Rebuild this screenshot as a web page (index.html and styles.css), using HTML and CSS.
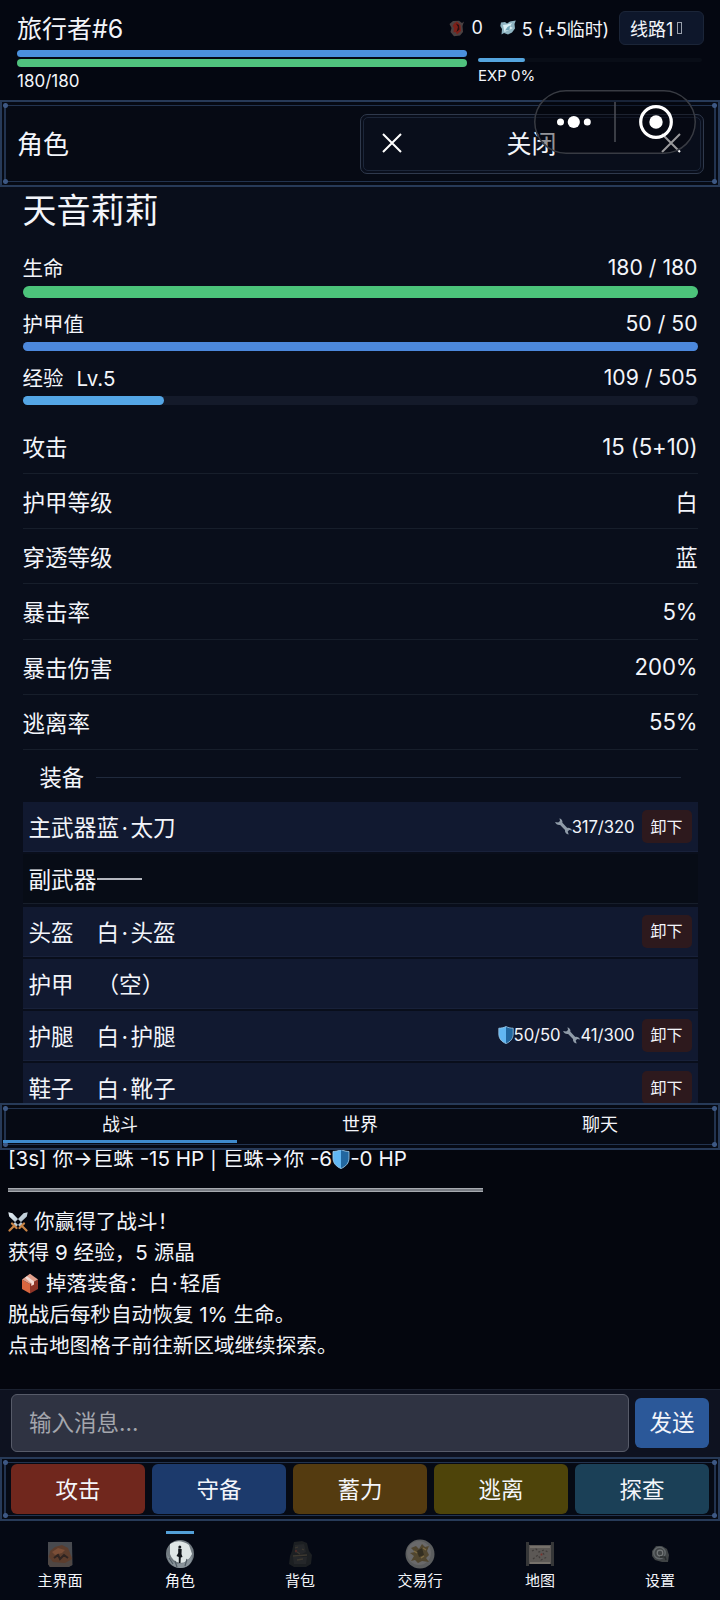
FILE: index.html
```html
<!DOCTYPE html>
<html lang="zh-CN">
<head>
<meta charset="utf-8">
<title>角色</title>
<link rel="stylesheet" href="styles.css">
</head>
<body>
<svg class="defs" width="0" height="0" aria-hidden="true">
  <defs>
    <linearGradient id="blade" x1="0" y1="0" x2="1" y2="1"><stop offset="0" stop-color="#e8f1f7"/><stop offset="1" stop-color="#9db0be"/></linearGradient>
    <symbol id="shield" viewBox="0 0 16 18">
      <path d="M8 .5C5.500 1.800 3 2.200 .8 2.200V8c0 4.800 3 7.800 7.200 9.600Z" fill="#62b7f2"/>
      <path d="M8 .5c2.500 1.300 5 1.700 7.200 1.700V8c0 4.800-3 7.800-7.200 9.600Z" fill="#22679f"/>
      <path d="M8 .5C5.500 1.800 3 2.200 .8 2.200V8c0 4.800 3 7.800 7.200 9.600 4.200-1.800 7.200-4.800 7.200-9.600V2.200C13 2.200 10.500 1.800 8 .5Z" fill="none" stroke="#9cc8e6" stroke-width=".8"/>
    </symbol>
    <symbol id="wrench" viewBox="0 0 17 17">
      <path d="M4.500 .2c2.200.6 3.300 2.500 2.900 4.500l4.900 5.200c2-.4 4.100.7 4.700 2.700l-2.800-.6-1.500 1.400 1 3.200c-2.500-.3-4.100-2.400-3.700-4.600L5.100 7C3 7.400 .8 6.200 .1 4l3.100.6 1.800-1.600Z" fill="#8f9ba8"/>
    </symbol>
    <symbol id="swords" viewBox="0 0 20 20">
      <path d="M.3.3 4.500 1.200 15 12.200 12.200 15 1.200 4.500ZM19.700.3 15.500 1.200 5 12.200 7.800 15 18.800 4.500Z" fill="url(#blade)"/>
      <path d="M11.500 16 16 11.500M14.500 14.500l4 4M8.500 16 4 11.500M5.500 14.500l-4 4" stroke="#c98445" stroke-width="2.200" stroke-linecap="round"/>
    </symbol>
    <symbol id="package" viewBox="0 0 18 21">
      <path d="M1 6.500 9 11V20.500L1 16Z" fill="#d9663f"/>
      <path d="M9 11l8-4.500V16l-8 4.500Z" fill="#8d3427"/>
      <path d="M1 6.500 9 .8l8 5.700L9 11Z" fill="#e3a08c"/>
      <path d="M6 3.200 13 8.600v3L10.300 13V10.200L4 4.800Z" fill="#f3dcd5"/>
    </symbol>
  </defs>
</svg>
<div class="app">
  <header class="status">
    <div class="status-top">
      <div class="player">旅行者#6</div>
      <div class="coin"><svg width="16" height="17" viewBox="0 0 16 17"><path d="M4 1 10 .8 13 3 15 1.500 13.500 6 14 12 11 15.500 5 16.300 1.500 12 2.500 8 .5 4Z" fill="#4b4142"/><path d="M5 3.500 8 1.500 11.500 5l.5 6L8 14.500 6.500 12 4.500 12.500 5 8 3.500 6Z" fill="#7d2019"/><path d="M7 3.500 9 7 7.500 12 10.500 9.500 10 5Z" fill="#251012"/></svg><span>0</span></div>
      <div class="crystal"><svg width="16" height="16" viewBox="0 0 16 16"><path d="M1 2.500 5 2 7 3.500 10 1.500 15.800.5 14.500 4 15 8.500 12 12.500 8 14.500 4 13 1.500 14.500 2 9 .3 6Z" fill="#8fb4c2"/><path d="M3 5 7 4.500 12 3 10 6.500 13 8 8 10.500 4.500 12Z" fill="#d8eef4"/><path d="M7.500 7 10 5.500 9.500 10 5 10.500Z" fill="#6fa3b6"/></svg><span>5 (+5临时)</span></div>
      <div class="line-chip"><span>线路1</span><i class="caret"></i></div>
    </div>
    <div class="status-bars">
      <div class="vitals">
        <div class="bar shield-bar"></div>
        <div class="bar health-bar"></div>
        <div class="vital-text">180/180</div>
      </div>
      <div class="exp">
        <div class="exp-track"><div class="exp-fill" style="width:21%"></div></div>
        <div class="exp-text">EXP 0%</div>
      </div>
    </div>
  </header>

  <section class="frame title-panel">
    <h1>角色</h1>
    <button class="close">
      <svg width="20" height="20" viewBox="0 0 20 20"><path d="M1 1 19 19M19 1 1 19" stroke="#fff" stroke-width="2"/></svg>
      <span>关闭</span>
      <svg width="20" height="20" viewBox="0 0 20 20"><path d="M1 1 19 19M19 1 1 19" stroke="#fff" stroke-width="2"/></svg>
    </button>
  </section>
  <div class="capsule">
    <svg width="162" height="64" viewBox="0 0 162 64"><g fill="#fff"><circle cx="26.500" cy="32" r="3.500"/><circle cx="39.800" cy="32" r="6.100"/><circle cx="53.300" cy="32" r="3.500"/><circle cx="122" cy="32" r="6.700"/></g><circle cx="122" cy="32" r="15.300" fill="none" stroke="#fff" stroke-width="3.200"/><path d="M81 12V52" stroke="#4c4f57" stroke-width="1.500"/></svg>
  </div>

  <main class="sheet">
    <h2>天音莉莉</h2>
    <div class="gauge life"><div class="gauge-head"><span>生命</span><b>180 / 180</b></div><div class="track"><div class="fill green" style="width:100%"></div></div></div>
    <div class="gauge"><div class="gauge-head"><span>护甲值</span><b>50 / 50</b></div><div class="track"><div class="fill blue" style="width:100%"></div></div></div>
    <div class="gauge"><div class="gauge-head"><span>经验<em>Lv.5</em></span><b>109 / 505</b></div><div class="track"><div class="fill sky" style="width:20.95%"></div></div></div>
    <dl class="stats">
      <div><dt>攻击</dt><dd>15 (5+10)</dd></div>
      <div><dt>护甲等级</dt><dd>白</dd></div>
      <div><dt>穿透等级</dt><dd>蓝</dd></div>
      <div><dt>暴击率</dt><dd>5%</dd></div>
      <div><dt>暴击伤害</dt><dd>200%</dd></div>
      <div><dt>逃离率</dt><dd>55%</dd></div>
    </dl>
    <h3>装备</h3>
    <ul class="gear">
      <li><span class="slot">主武器</span><span class="item">蓝<i class="dot">·</i>太刀</span><span class="wear"><svg width="17" height="17"><use href="#wrench"/></svg>317/320</span><button>卸下</button></li>
      <li class="none"><span class="slot">副武器</span><span class="item"><i class="dash"></i></span></li>
      <li><span class="slot">头盔</span><span class="item">白<i class="dot">·</i>头盔</span><button>卸下</button></li>
      <li><span class="slot">护甲</span><span class="item">（空）</span></li>
      <li><span class="slot">护腿</span><span class="item">白<i class="dot">·</i>护腿</span><span class="wear"><svg width="16" height="18"><use href="#shield"/></svg>50/50<svg class="gap" width="17" height="17"><use href="#wrench"/></svg>41/300</span><button>卸下</button></li>
      <li><span class="slot">鞋子</span><span class="item">白<i class="dot">·</i>靴子</span><button>卸下</button></li>
    </ul>
  </main>

  <nav class="frame tabs"><a class="on">战斗</a><a>世界</a><a>聊天</a></nav>

  <section class="log">
    <p>[3s] 你→巨蛛 -15 HP | 巨蛛→你 -6<svg width="18" height="20"><use href="#shield"/></svg>-0 HP</p>
    <hr>
    <p><svg class="swords" width="20" height="20"><use href="#swords"/></svg>你赢得了战斗！</p>
    <p>获得 9 经验，5 源晶</p>
    <p class="loot"><svg width="18" height="21"><use href="#package"/></svg>掉落装备：白<i class="dot">·</i>轻盾</p>
    <p>脱战后每秒自动恢复 1% 生命。</p>
    <p>点击地图格子前往新区域继续探索。</p>
  </section>

  <form class="composer">
    <div class="input">输入消息...</div>
    <button type="button">发送</button>
  </form>

  <section class="frame actions">
    <button class="attack">攻击</button>
    <button class="guard">守备</button>
    <button class="charge">蓄力</button>
    <button class="flee">逃离</button>
    <button class="scout">探查</button>
  </section>

  <nav class="dock">
    <a><svg width="30" height="30" viewBox="0 0 30 30"><path d="M3 3 27 3 27.500 26 24 28 5 28 3 25Z" fill="#484a4f"/><path d="M3 16 12 15 27 17V26L23 28 5 28 3 25Z" fill="#4f4744"/><path d="M5 12 10 8 17 6 23 9 25 14 27 20 20 24 8 23 4 18Z" fill="#5c3d2d"/><path d="M7 13 13 9 20 11 17 14 10 16Z" fill="#7b4e37"/><path d="M9 19 13 16 15 20 19 16 23 19" stroke="#2f2421" stroke-width="2" fill="none"/></svg><span>主界面</span></a>
    <a class="on"><svg width="30" height="30" viewBox="0 0 30 30"><circle cx="15" cy="15" r="14" fill="#717a80"/><path d="M5 5Q14 -1 24 6L27 15Q23 24 15 24 7 22 5 15Z" fill="#dfe6e6"/><path d="M2 16 7 22 12 25 19 24 27 17Q27 29 15 29 4 28 2 16Z" fill="#89939a"/><path d="M4 19 8 25M10 22 12 28M22 20 20 27" stroke="#4f5a62" stroke-width="1.200"/><circle cx="14.800" cy="8" r="1.500" fill="#11151a"/><path d="M13.200 9.500 16.700 10 16.500 15 17.500 18 15.800 18.500 15.500 24 13.800 24 13.800 18 11.500 17 13.200 14Z" fill="#11151a"/></svg><span>角色</span></a>
    <a><svg width="30" height="30" viewBox="0 0 30 30"><path d="M9 3 17 2 22 4 24 12 27 16 26 25 21 28 9 28 4 25 5 17 7 12Z" fill="#1c1f22"/><path d="M10 6 19 5 21 13 17 15 10 14ZM8 18 22 18 21 25 9 25Z" fill="#25272a"/><path d="M10 9 13 8M17 10 19 11M8 17 22 16M12 21 18 20M12 13 15 15" stroke="#3d3830" stroke-width="1.300"/><circle cx="11" cy="12" r="1.200" fill="#4d2b27"/></svg><span>背包</span></a>
    <a><svg width="30" height="30" viewBox="0 0 30 30"><circle cx="15" cy="15" r="14.500" fill="#5b5d5e"/><circle cx="14" cy="14" r="12" fill="#69696a"/><path d="M6 9 11 7 14 10 17 5 20 8 24 7 22 12 24 16 21 19 24 23 17 22 13 24 10 21 6 22 9 17 5 14 10 13Z" fill="#51462f"/><path d="M12 12 17 9 19 16 14 18Z" fill="#332e21"/><path d="M9 12 12 14M16 19 19 17M18 9 21 11" stroke="#7d6a42" stroke-width="1.500"/></svg><span>交易行</span></a>
    <a><svg width="30" height="30" viewBox="0 0 30 30"><path d="M3 6H27V25H3Z" fill="#5c5855"/><path d="M1 3H4V27H1ZM26 3H29V27H26Z" fill="#363738"/><path d="M5 7H25V9H5ZM5 23H25V25H5Z" fill="#76716b"/><path d="M7 12 11 10 14 13 19 11 23 13M8 20 13 16 16 21 22 18M18 14 20 17" stroke="#403c3a" stroke-width="1.200" stroke-dasharray="2 2" fill="none"/><circle cx="16.500" cy="15.500" r="1" fill="#7b302a"/></svg><span>地图</span></a>
    <a><svg width="30" height="30" viewBox="0 0 30 30"><path d="M7 12 11 7 17 7 22 10 24 16 23 23 17 23 10 21 7 17Z" fill="#3f4345"/><g fill="none"><circle cx="14.500" cy="14" r="5.700" stroke="#62676a" stroke-width="1.500"/><circle cx="15" cy="14" r="2.800" stroke="#75797a" stroke-width="1.200"/></g><path d="M15 18 20 18 21 21" stroke="#282c2e" stroke-width="1.500" fill="none"/></svg><span>设置</span></a>
  </nav>
</div>
</body>
</html>
```

FILE: styles.css
```css
* { box-sizing: border-box; margin: 0; padding: 0; }
body {
  background: #04060e;
  color: #f3f5fa;
  font-family: Inter, "Noto Sans CJK SC", sans-serif;
  font-weight: 400;
}
button { font: inherit; color: inherit; border: 0; background: none; }
b, em, i { font-weight: 400; font-style: normal; }
h1, h2, h3 { font-weight: 400; }
ul { list-style: none; }
svg { display: block; flex: none; }
.defs { position: absolute; }
.app { width: 720px; height: 1600px; display: flex; flex-direction: column; position: relative; overflow: hidden; }

/* Top status */
.status { height: 100px; background: #040711; padding: 10px 16px 0; }
.status-top { height: 36px; display: flex; align-items: center; font-size: 18px; }
.status-top span { padding-bottom: 1px; }
.player { font-size: 25px; flex: 1; padding: 0 0 3px 1px; }
.coin, .crystal { display: flex; align-items: center; gap: 6px; }
.coin { margin-right: 17px; }
.crystal { margin-right: 10px; letter-spacing: -.1px; }
.line-chip { width: 85px; height: 34px; border: 1px solid #1b2538; border-radius: 6px; background: #0e172b; padding-left: 10px; display: flex; align-items: center; }
.caret { width: 5px; height: 12px; border: 1px solid #99a0ac; margin-left: 4px; }
.status-bars { display: flex; gap: 11px; padding: 4px 0 0 1px; }
.vitals { width: 450px; }
.bar { border-radius: 4px; }
.shield-bar { height: 7px; background: #4b90dd; }
.health-bar { height: 8px; background: #50c27e; margin-top: 2px; }
.vital-text { font-size: 17px; line-height: 20px; margin-top: 4px; }
.exp { width: 224px; padding-top: 8px; }
.exp-track { height: 4px; border-radius: 2px; background: #090d17; }
.exp-fill { height: 4px; border-radius: 2px; background: #55a5de; }
.exp-text { font-size: 15px; line-height: 20px; margin-top: 4px; }

/* Double-line frame with studs in its corners */
.frame { position: relative; border: 2px solid #273a58; flex: none; background: #060a14; }
.frame::before { content: ""; position: absolute; inset: 3px 2px; border: 1px solid #22334f; border-width: 1px 2px; pointer-events: none; }
.frame::after {
  content: ""; position: absolute; inset: 0 0; pointer-events: none;
  background:
    radial-gradient(circle, #3d5884 2px, transparent 3px) 0 0 / 7px 7px no-repeat,
    radial-gradient(circle, #3d5884 2px, transparent 3px) 100% 0 / 7px 7px no-repeat,
    radial-gradient(circle, #3d5884 2px, transparent 3px) 0 100% / 7px 7px no-repeat,
    radial-gradient(circle, #3d5884 2px, transparent 3px) 100% 100% / 7px 7px no-repeat;
}
.title-panel { height: 87px; display: flex; justify-content: space-between; align-items: center; padding: 0 14px 0 15px; }
.title-panel h1 { font-size: 26px; padding-bottom: 3px; }
.close { position: relative; width: 344px; height: 60px; border: 1px solid #2f394c; border-radius: 7px; background: #090e1b; display: flex; align-items: center; justify-content: space-between; padding: 0 22px 2px 21px; font-size: 25px; }
.close span { padding-bottom: 2px; }
.close::before { content: ""; position: absolute; inset: 2px; border: 1px solid #1c2639; border-radius: 5px; }
.capsule { position: absolute; left: 534px; top: 90px; width: 162px; height: 64px; border-radius: 32px; background: rgba(2, 3, 7, .4); box-shadow: inset 0 0 0 1.500px #383b43; }

/* Character sheet */
.sheet { height: 916px; flex: none; overflow: hidden; background: #090e1b; padding: 0 22.500px; }
.sheet h2 { font-size: 34px; line-height: 47px; height: 48px; }
.gauge-head { display: flex; justify-content: space-between; align-items: center; height: 36px; padding-bottom: 2px; font-size: 20.500px; }
.gauge-head em { margin-left: 13px; }
.gauge-head b { font-size: 21.200px; }
.gauge { padding-top: 8px; }
.gauge.life { padding-top: 15px; }
.gauge:nth-of-type(3) { padding-top: 9px; }
.track { height: 9px; border-radius: 5px; background: #141a2a; }
.life .track { height: 12px; border-radius: 6px; }
.fill { height: 100%; border-radius: inherit; }
.green { background: #4cc47b; }
.blue { background: #4c88dc; }
.sky { background: #54a6e6; }
.stats { padding-top: 14px; font-size: 22.500px; }
.stats dd { font-size: 22.200px; letter-spacing: -.1px; }
.stats div { height: 55.150px; border-bottom: 1px solid #171e2b; display: flex; justify-content: space-between; align-items: center; }
.sheet h3 { height: 52.400px; padding: 3px 17px 0; display: flex; align-items: center; gap: 12px; font-size: 22.300px; line-height: 26px; }
.sheet h3::after { content: ""; flex: 1; height: 1px; background: #202a3d; }
.gear { display: flex; flex-direction: column; gap: 2.200px; font-size: 22.600px; }
.gear li { height: 50px; flex: none; display: flex; align-items: center; padding: 0 6px; background: #111930; border-bottom: 1px solid #18213a; }
.gear .none { background: #070c16; border-color: #171e2b; }
.slot { width: 68px; }
.item { flex: 1; }
.dot { display: inline-block; width: .5em; text-align: center; }
.dash { display: block; width: 45px; height: 1.500px; background: #b4b8bf; }
.wear { font-size: 16.700px; letter-spacing: -.1px; display: flex; align-items: center; margin-right: 7px; }
.wear .gap { margin-left: 3px; }
.gear button { width: 50px; height: 33px; border-radius: 5px; background: #2d191d; font-size: 16px; padding-bottom: 2px; }

/* Message tabs */
.tabs { height: 47px; display: flex; }
.tabs a { position: relative; flex: 0 0 240px; height: 40px; line-height: 39px; font-size: 18px; text-align: center; z-index: 1; }
.tabs a:first-child { margin-left: -2px; }
.tabs .on::after { content: ""; position: absolute; left: 3px; right: 3px; bottom: 2px; height: 3px; background: #3f8bcd; }

.log { height: 239px; flex: none; padding: 0 8px; font-size: 20.600px; }
.log p { height: 31.100px; line-height: 31.100px; display: flex; align-items: center; white-space: pre; }
.log p:first-child { margin-top: -7px; }
.log hr { height: 4px; margin: 14px 0 14px; width: 475px; border: solid #a6a9af; border-width: 1px 0; background: #777b82; }
.swords { margin-right: 6px; }
.loot { padding-left: 13px; }
.loot svg { margin-right: 7px; }

/* Composer */
.composer { height: 68px; flex: none; background: #0e1220; border-top: 1px solid #1b2130; display: flex; align-items: center; gap: 6px; padding: 0 11px 2px; font-size: 22.500px; }
.input { flex: 1; height: 58px; border: 1px solid #575b69; border-radius: 6px; background: #2f3342; color: #a4a6ad; padding: 0 0 3px 17px; display: flex; align-items: center; }
.composer button { width: 74px; height: 50px; border-radius: 6px; background: #2b5899; padding-bottom: 3px; }

/* Actions */
.actions { height: 64px; display: flex; gap: 7px; align-items: center; padding: 0 9px; font-size: 22.500px; }
.actions button { flex: 1; height: 50px; border-radius: 6px; z-index: 1; padding-bottom: 3px; }
.attack { background: #70271d; }
.guard { background: #1c3a6c; }
.charge { background: #543b10; }
.flee { background: #4e440a; }
.scout { background: #1b4057; }

.dock { flex: 1; display: flex; background: #050914; }
.dock a { position: relative; flex: 1; display: flex; flex-direction: column; align-items: center; padding-top: 18px; font-size: 15px; }
.dock span { line-height: 22px; margin-top: 1px; }
.dock .on::before { content: ""; position: absolute; top: 10px; width: 28px; height: 3px; background: #53a0d8; }
```
